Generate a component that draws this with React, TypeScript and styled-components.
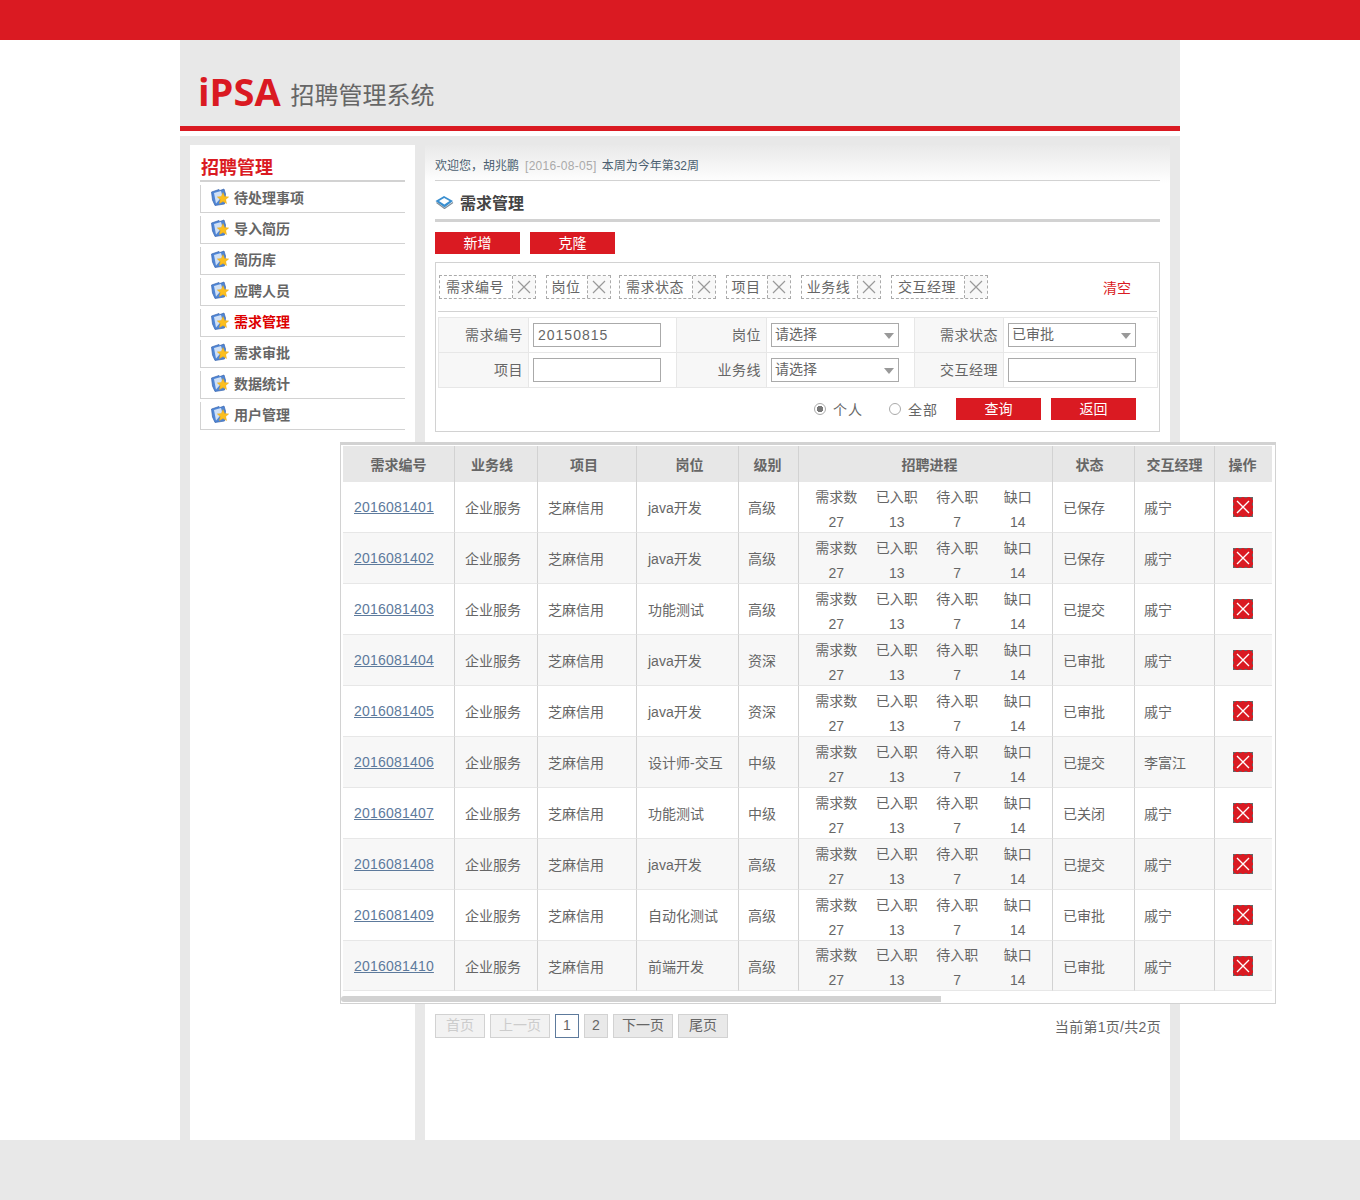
import * as React from 'react';
import styled, { createGlobalStyle } from 'styled-components';

const GlobalStyle = createGlobalStyle`
    html, body {
        margin: 0;
        padding: 0;
        background: #fff;
    }
    body {
        font-family: "Liberation Sans", "Noto Sans CJK SC", sans-serif;
        font-size: 14px;
        color: #666;
    }
`;

const RED = '#da1a22';
const LINE = '#d2d2d2';

const TopBar = styled.div`
    height: 40px;
    background: ${RED};
`;

const Wrapper = styled.div`
    width: 1000px;
    height: 1100px;
    margin: 0 auto;
    background: #e8e8e8;
`;

const Header = styled.div`
    height: 86px;
    box-sizing: content-box;
    padding-left: 18px;
    display: flex;
    align-items: flex-end;
    gap: 10px;
    border-bottom: 5px solid ${RED};
    box-shadow: 0 5px 0 #fff;
`;

const Logo = styled.div`
    font-family: "Open Sans", sans-serif;
    font-weight: 700;
    font-size: 38px;
    line-height: 40px;
    color: ${RED};
    margin-bottom: 15px;
`;

const SystemName = styled.div`
    font-size: 24px;
    line-height: 30px;
    color: #666;
    margin-bottom: 15px;
`;

const Body = styled.div`
    display: flex;
    gap: 10px;
    padding: 14px 10px 0;
    height: 995px;
    box-sizing: content-box;
`;

const Sidebar = styled.div`
    width: 225px;
    background: #fff;
    padding: 0 10px;
    box-sizing: border-box;
`;

const SideTitle = styled.div`
    height: 37px;
    padding: 11px 0 0 1px;
    box-sizing: border-box;
    font-size: 18px;
    line-height: 25px;
    font-weight: 700;
    color: ${RED};
    border-bottom: 2px solid ${LINE};
`;

const SideItem = styled.div<{ $active?: boolean }>`
    display: flex;
    align-items: center;
    gap: 5px;
    height: 28px;
    margin-top: 3px;
    padding: 0 0 3px 10px;
    box-sizing: border-box;
    border-left: 1px solid ${LINE};
    border-bottom: 1px solid ${LINE};
    font-size: 14px;
    font-weight: 700;
    color: ${(p) => (p.$active ? '#d00' : '#666')};
`;

const Main = styled.div`
    width: 745px;
    padding: 0 10px;
    box-sizing: border-box;
    background: linear-gradient(#e9e9e9 0, #fff 38px) no-repeat;
    background-color: #fff;
`;

const Welcome = styled.div`
    height: 36px;
    line-height: 42px;
    font-size: 12px;
    color: #4b5f70;
    border-bottom: 1px solid ${LINE};
    box-sizing: border-box;
`;

const DateText = styled.span`
    color: #aaa;
    margin: 0 5px 0 6px;
    letter-spacing: 0.3px;
`;

const PageTitle = styled.div`
    display: flex;
    align-items: center;
    gap: 6px;
    height: 41px;
    padding-top: 4px;
    box-sizing: border-box;
    border-bottom: 3px solid ${LINE};
    font-size: 16px;
    font-weight: 700;
    color: #444;
`;

const Toolbar = styled.div`
    display: flex;
    gap: 10px;
    margin-top: 10px;
`;

const RedButton = styled.button`
    width: 85px;
    height: 22px;
    padding: 0 0 2px;
    border: 0;
    background: ${RED};
    color: #fff;
    font: 14px "Liberation Sans", "Noto Sans CJK SC", sans-serif;
`;

const Panel = styled.div`
    margin-top: 8px;
    height: 170px;
    border: 1px solid ${LINE};
    box-sizing: border-box;
    padding: 0 2px;
`;

const TagRow = styled.div`
    display: flex;
    align-items: flex-start;
    height: 49px;
    padding: 12px 0 0 1px;
    box-sizing: border-box;
    border-bottom: 1px solid ${LINE};
`;

const Tag = styled.div<{ $after: number }>`
    display: flex;
    height: 24px;
    box-sizing: border-box;
    border: 1px dashed #aaa;
    margin-right: ${(p) => p.$after}px;
`;

const TagLabel = styled.span<{ $w: number }>`
    width: ${(p) => p.$w}px;
    box-sizing: border-box;
    padding-right: 2px;
    line-height: 22px;
    text-align: center;
    letter-spacing: 0.5px;
    border-right: 1px dashed #aaa;
    white-space: nowrap;
`;

const TagClose = styled.span`
    width: 22px;
    display: flex;
    align-items: center;
    justify-content: center;
    background: #f8f8f8;
`;

const ClearLink = styled.a`
    margin: 1px 26px 0 auto;
    line-height: 24px;
    color: ${RED};
    font-size: 14px;
`;

const FormGrid = styled.div`
    display: grid;
    grid-template-columns: 90px 148px 90px 148px 89px 154px;
    grid-auto-rows: 35px;
    width: 720px;
    margin-top: 5px;
    border-top: 1px solid #e7e7e7;
    border-left: 1px solid #e7e7e7;
    box-sizing: border-box;
`;

const FormLabel = styled.div`
    display: flex;
    align-items: center;
    justify-content: flex-end;
    padding: 0 5px 2px 0;
    background: #f7f7f7;
    border-right: 1px solid #e7e7e7;
    border-bottom: 1px solid #e7e7e7;
    letter-spacing: 0.5px;
`;

const FormValue = styled.div`
    display: flex;
    align-items: center;
    padding-left: 4px;
    border-right: 1px solid #e7e7e7;
    border-bottom: 1px solid #e7e7e7;
`;

const TextInput = styled.input`
    width: 128px;
    height: 24px;
    box-sizing: border-box;
    padding: 0 4px;
    border: 1px solid #aaa;
    border-radius: 0;
    outline: 0;
    color: #666;
    letter-spacing: 1px;
    font: 14px "Liberation Sans", "Noto Sans CJK SC", sans-serif;
`;

const FakeSelect = styled.div`
    position: relative;
    width: 128px;
    height: 24px;
    box-sizing: border-box;
    padding-left: 3px;
    border: 1px solid #aaa;
    line-height: 20px;

    &::after {
        content: '';
        position: absolute;
        right: 4px;
        top: 9px;
        border-style: solid;
        border-width: 6px 5px 0;
        border-color: #999 transparent transparent;
    }
`;

const QueryRow = styled.div`
    display: flex;
    align-items: center;
    height: 22px;
    margin-top: 10px;
    padding-left: 376px;
`;

const RadioLabel = styled.label<{ $w: number }>`
    display: flex;
    align-items: center;
    gap: 7px;
    width: ${(p) => p.$w}px;
    letter-spacing: 1px;
    white-space: nowrap;
`;

const RadioDot = styled.span<{ $on?: boolean }>`
    width: 12px;
    height: 12px;
    box-sizing: border-box;
    border: 1px solid #aaa;
    border-radius: 50%;
    background: ${(p) => (p.$on ? 'radial-gradient(circle, #777 0 3px, #fff 3.5px)' : '#fff')};
`;

const QueryButtons = styled.div`
    display: flex;
    gap: 10px;
`;

const TableFrame = styled.div`
    width: 936px;
    margin: 10px 0 0 -95px;
    padding: 1px 2px 0 2px;
    box-sizing: border-box;
    background: #fff;
    border: 1px solid ${LINE};
    border-top-width: 3px;
`;

const Table = styled.table`
    width: 929px;
    table-layout: fixed;
    border-collapse: separate;
    border-spacing: 0;
`;

// $shift nudges a title sideways, the titles in this table are not quite centred
const HeadCell = styled.th<{ $shift: number }>`
    height: 36px;
    padding: 0 ${(p) => Math.max(-2 * p.$shift, 0)}px 0 ${(p) => Math.max(2 * p.$shift, 0)}px;
    background: #e7e7e7;
    border-right: 1px solid ${LINE};
    font-size: 14px;
    font-weight: 700;
    color: #666;

    &:last-child {
        border-right: 0;
    }
`;

const Row = styled.tr<{ $even: boolean }>`
    background: ${(p) => (p.$even ? '#f7f7f7' : '#fff')};

    &:last-child > td {
        height: 49px;
    }
`;

const Cell = styled.td<{ $pad?: number }>`
    height: 50px;
    padding: 0 0 0 ${(p) => p.$pad ?? 10}px;
    border-right: 1px solid ${LINE};
    border-bottom: 1px solid #e7e7e7;
    white-space: nowrap;
    font-size: 14px;
`;

const ActionCell = styled.td`
    padding: 0 2px 0 0;
    border-bottom: 1px solid #e7e7e7;
    text-align: center;
`;

const CodeLink = styled.a`
    color: #5d7a9c;
    text-decoration: underline;
    letter-spacing: 0.2px;
`;

const ProgressCell = styled.td`
    padding: 0 0 0 7px;
    border-right: 1px solid ${LINE};
    border-bottom: 1px solid #e7e7e7;
`;

const ProgressGrid = styled.div`
    display: grid;
    grid-template-columns: repeat(4, 60.5px);
    grid-template-rows: 25px 22px;
    padding-top: 2px;
    line-height: 25px;
    text-align: center;
`;

const DeleteButton = styled.span`
    display: inline-flex;
    align-items: center;
    justify-content: center;
    width: 20px;
    height: 20px;
    box-sizing: border-box;
    vertical-align: middle;
    background: ${RED};
    border: 1px dashed #666;
`;

const ScrollTrack = styled.div`
    height: 12px;
    padding-top: 5px;
    box-sizing: border-box;
    margin-left: -2px;
`;

const ScrollThumb = styled.div`
    width: 600px;
    height: 6px;
    background: ${LINE};
    border-radius: 3px 0 0 3px;
`;

const Pager = styled.div`
    display: flex;
    align-items: center;
    gap: 5px;
    margin-top: 10px;
`;

const PageButton = styled.span<{ $w: number; $kind?: 'off' | 'current' }>`
    width: ${(p) => p.$w}px;
    height: 24px;
    box-sizing: border-box;
    text-align: center;
    line-height: 21px;
    border: 1px solid ${(p) => (p.$kind === 'current' ? '#5d7a9c' : LINE)};
    background: ${(p) => (p.$kind === 'current' ? '#fff' : p.$kind === 'off' ? '#f2f2f2' : '#e9e9e9')};
    color: ${(p) => (p.$kind === 'off' ? '#ccc' : '#666')};
`;

const PageInfo = styled.span`
    margin-left: auto;
    margin-right: -1px;
    letter-spacing: 0.3px;
`;

const Footer = styled.div`
    height: 60px;
    background: #e8e8e8;
`;

const FolderIcon = () => (
    <svg width="18" height="18" viewBox="0 0 18 18">
        <path d="M0.5 4 8 1.5 9 2.5l4-1.5 1.5 5-1 10-9.5 1.5L1.5 12z" fill="#4f86d6" stroke="#3a66ad" strokeWidth="0.7" />
        <path d="M3 5 10 3l1.5 5-6.5 7.5z" fill="#cfe0f6" />
        <path d="m12 4.5 1.7 4 4 .4-3 2.7.9 4-3.6-2.1-3.6 2.1.9-4-3-2.7 4-.4z" fill="#fcbf1e" stroke="#eda70f" strokeWidth="0.4" />
    </svg>
);

const BookIcon = () => (
    <svg width="19" height="14" viewBox="0 0 19 14">
        <path d="M0.5 6 9 1l9 5-8.5 6.5z" fill="#3a8fd0" />
        <path d="M4 6 9.2 3 14.5 6 9.4 9.6z" fill="#fff" />
        <path d="M1.5 7.5 9.5 13.5 18 7.5" fill="none" stroke="#7d8c99" strokeWidth="1.2" />
    </svg>
);

const CrossIcon = ({ size, color, width }: { size: number; color: string; width: number }) => (
    <svg width={size} height={size} viewBox="0 0 14 14">
        <path d="M1 1 13 13M13 1 1 13" stroke={color} strokeWidth={width} fill="none" />
    </svg>
);

const sideItems = ['待处理事项', '导入简历', '简历库', '应聘人员', '需求管理', '需求审批', '数据统计', '用户管理'];

const tags = [
    { label: '需求编号', w: 73, after: 10 },
    { label: '岗位', w: 41, after: 8 },
    { label: '需求状态', w: 73, after: 10 },
    { label: '项目', w: 41, after: 10 },
    { label: '业务线', w: 56, after: 10 },
    { label: '交互经理', w: 73, after: 0 },
];

const columns = [
    { title: '需求编号', width: 112, shift: 0 },
    { title: '业务线', width: 83, shift: -4 },
    { title: '项目', width: 99, shift: -3 },
    { title: '岗位', width: 102, shift: 2 },
    { title: '级别', width: 60, shift: -1 },
    { title: '招聘进程', width: 254, shift: 4 },
    { title: '状态', width: 82, shift: -4 },
    { title: '交互经理', width: 80, shift: 0 },
    { title: '操作', width: 57, shift: -1 },
];

const rows = [
    ['2016081401', 'java开发', '高级', '已保存', '戚宁'],
    ['2016081402', 'java开发', '高级', '已保存', '戚宁'],
    ['2016081403', '功能测试', '高级', '已提交', '戚宁'],
    ['2016081404', 'java开发', '资深', '已审批', '戚宁'],
    ['2016081405', 'java开发', '资深', '已审批', '戚宁'],
    ['2016081406', '设计师-交互', '中级', '已提交', '李富江'],
    ['2016081407', '功能测试', '中级', '已关闭', '戚宁'],
    ['2016081408', 'java开发', '高级', '已提交', '戚宁'],
    ['2016081409', '自动化测试', '高级', '已审批', '戚宁'],
    ['2016081410', '前端开发', '高级', '已审批', '戚宁'],
];

const progress = ['需求数', '已入职', '待入职', '缺口', '27', '13', '7', '14'];

const App = () => (
    <>
        <GlobalStyle />
        <TopBar />
        <Wrapper>
            <Header>
                <Logo>iPSA</Logo>
                <SystemName>招聘管理系统</SystemName>
            </Header>
            <Body>
                <Sidebar>
                    <SideTitle>招聘管理</SideTitle>
                    {sideItems.map((item) => (
                        <SideItem key={item} $active={item === '需求管理'}>
                            <FolderIcon />
                            {item}
                        </SideItem>
                    ))}
                </Sidebar>
                <Main>
                    <Welcome>
                        欢迎您，胡兆鹏
                        <DateText>[2016-08-05]</DateText>
                        本周为今年第32周
                    </Welcome>
                    <PageTitle>
                        <BookIcon />
                        需求管理
                    </PageTitle>
                    <Toolbar>
                        <RedButton type="button">新增</RedButton>
                        <RedButton type="button">克隆</RedButton>
                    </Toolbar>
                    <Panel>
                        <TagRow>
                            {tags.map((tag) => (
                                <Tag key={tag.label} $after={tag.after}>
                                    <TagLabel $w={tag.w}>{tag.label}</TagLabel>
                                    <TagClose>
                                        <CrossIcon size={14} color="#999" width={1.2} />
                                    </TagClose>
                                </Tag>
                            ))}
                            <ClearLink>清空</ClearLink>
                        </TagRow>
                        <FormGrid>
                            <FormLabel>需求编号</FormLabel>
                            <FormValue>
                                <TextInput readOnly defaultValue="20150815" />
                            </FormValue>
                            <FormLabel>岗位</FormLabel>
                            <FormValue>
                                <FakeSelect>请选择</FakeSelect>
                            </FormValue>
                            <FormLabel>需求状态</FormLabel>
                            <FormValue>
                                <FakeSelect>已审批</FakeSelect>
                            </FormValue>
                            <FormLabel>项目</FormLabel>
                            <FormValue>
                                <TextInput readOnly />
                            </FormValue>
                            <FormLabel>业务线</FormLabel>
                            <FormValue>
                                <FakeSelect>请选择</FakeSelect>
                            </FormValue>
                            <FormLabel>交互经理</FormLabel>
                            <FormValue>
                                <TextInput readOnly />
                            </FormValue>
                        </FormGrid>
                        <QueryRow>
                            <RadioLabel $w={75}>
                                <RadioDot $on />
                                个人
                            </RadioLabel>
                            <RadioLabel $w={67}>
                                <RadioDot />
                                全部
                            </RadioLabel>
                            <QueryButtons>
                                <RedButton type="button">查询</RedButton>
                                <RedButton type="button">返回</RedButton>
                            </QueryButtons>
                        </QueryRow>
                    </Panel>
                    <TableFrame>
                        <Table>
                            <colgroup>
                                {columns.map((col) => (
                                    <col key={col.title} width={col.width} />
                                ))}
                            </colgroup>
                            <thead>
                                <tr>
                                    {columns.map((col) => (
                                        <HeadCell key={col.title} $shift={col.shift}>
                                            {col.title}
                                        </HeadCell>
                                    ))}
                                </tr>
                            </thead>
                            <tbody>
                                {rows.map(([code, job, level, status, manager], i) => (
                                    <Row key={code} $even={i % 2 === 1}>
                                        <Cell $pad={11}>
                                            <CodeLink>{code}</CodeLink>
                                        </Cell>
                                        <Cell>企业服务</Cell>
                                        <Cell>芝麻信用</Cell>
                                        <Cell $pad={11}>{job}</Cell>
                                        <Cell $pad={9}>{level}</Cell>
                                        <ProgressCell>
                                            <ProgressGrid>
                                                {progress.map((text, n) => (
                                                    <span key={n}>{text}</span>
                                                ))}
                                            </ProgressGrid>
                                        </ProgressCell>
                                        <Cell>{status}</Cell>
                                        <Cell $pad={9}>{manager}</Cell>
                                        <ActionCell>
                                            <DeleteButton>
                                                <CrossIcon size={14} color="#fff" width={1.4} />
                                            </DeleteButton>
                                        </ActionCell>
                                    </Row>
                                ))}
                            </tbody>
                        </Table>
                        <ScrollTrack>
                            <ScrollThumb />
                        </ScrollTrack>
                    </TableFrame>
                    <Pager>
                        <PageButton $w={50} $kind="off">首页</PageButton>
                        <PageButton $w={60} $kind="off">上一页</PageButton>
                        <PageButton $w={24} $kind="current">1</PageButton>
                        <PageButton $w={24}>2</PageButton>
                        <PageButton $w={60}>下一页</PageButton>
                        <PageButton $w={50}>尾页</PageButton>
                        <PageInfo>当前第1页/共2页</PageInfo>
                    </Pager>
                </Main>
            </Body>
        </Wrapper>
        <Footer />
    </>
);

export default App;
